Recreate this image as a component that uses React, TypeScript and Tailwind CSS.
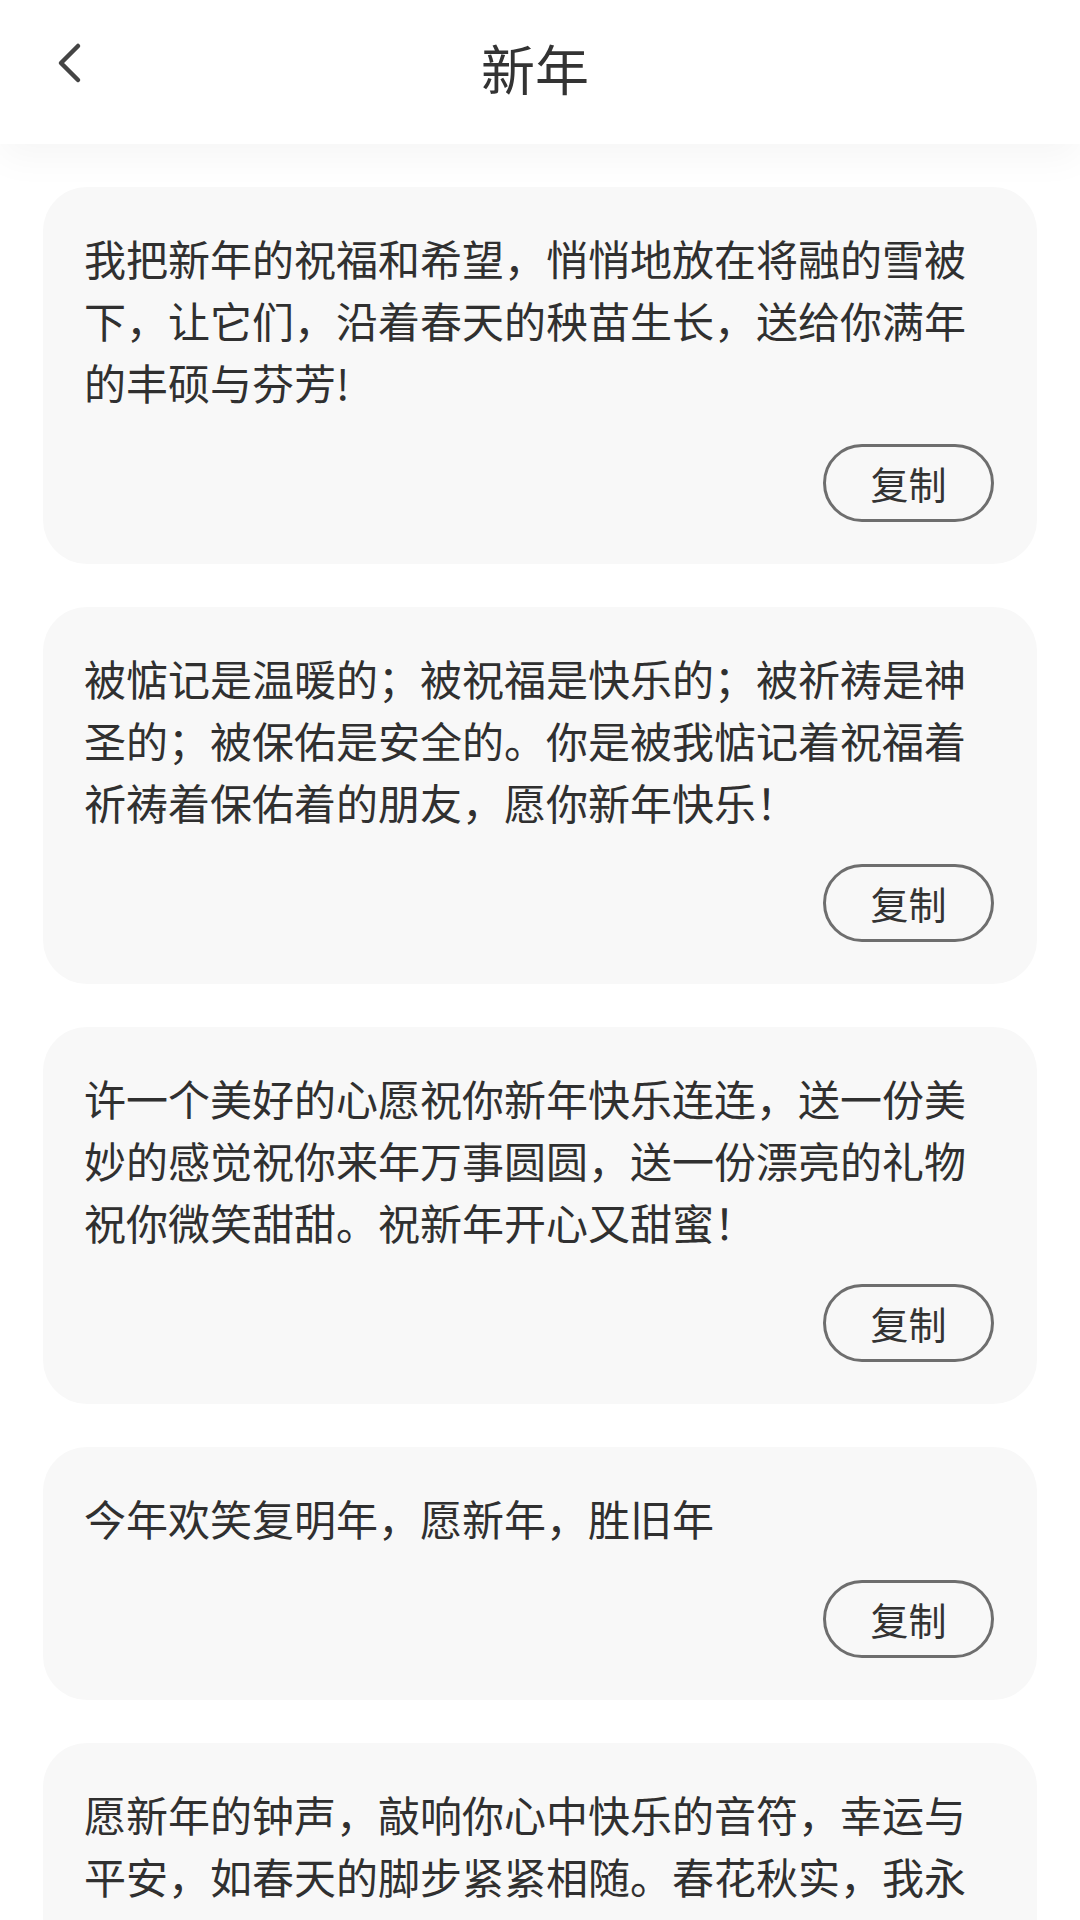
import React from "react";

const items = [
  "我把新年的祝福和希望，悄悄地放在将融的雪被下，让它们，沿着春天的秧苗生长，送给你满年的丰硕与芬芳!",
  "被惦记是温暖的；被祝福是快乐的；被祈祷是神圣的；被保佑是安全的。你是被我惦记着祝福着祈祷着保佑着的朋友，愿你新年快乐！",
  "许一个美好的心愿祝你新年快乐连连，送一份美妙的感觉祝你来年万事圆圆，送一份漂亮的礼物祝你微笑甜甜。祝新年开心又甜蜜！",
  "今年欢笑复明年，愿新年，胜旧年",
  "愿新年的钟声，敲响你心中快乐的音符，幸运与平安，如春天的脚步紧紧相随。春花秋实，我永远与你同在！",
];

export default function App() {
  return (
    <div
      className="w-[1080px] min-h-[1920px] bg-white text-[#333333]"
      style={{ fontFamily: '"Noto Sans CJK SC", "Noto Sans", sans-serif' }}
    >
      <header className="relative z-10 h-[144px] bg-white flex items-center justify-center shadow-[0_14px_36px_rgba(0,0,0,0.04)]">
        <button className="absolute left-[50px] top-[38px] w-[40px] h-[50px] flex items-center justify-center">
          <svg width="34" height="44" viewBox="0 0 34 44" fill="none">
            <path
              d="M25 5 L8 22 L25 39"
              stroke="#444444"
              strokeWidth="4.5"
              strokeLinecap="round"
              strokeLinejoin="round"
            />
          </svg>
        </button>
        <h1 className="text-[54px] leading-none font-normal text-[#333333] pb-[8px] pr-[10px]">新年</h1>
      </header>
      <main className="flex flex-col gap-[43px] px-[43px] pt-[43px]">
        {items.map((t, i) => (
          <div key={i} className="bg-[#f8f8f8] rounded-[44px] pt-[40px] pl-[41px] pr-[43px] pb-[42px] flex flex-col">
            <p className="text-[42px] leading-[62px] text-[#303030]">{t}</p>
            <div className="flex justify-end mt-[31px]">
              <button className="w-[171px] h-[78px] rounded-full border-[3px] border-[#6e6e6e] text-[38px] leading-none text-[#333333] flex items-center justify-center">
                复制
              </button>
            </div>
          </div>
        ))}
      </main>
    </div>
  );
}
